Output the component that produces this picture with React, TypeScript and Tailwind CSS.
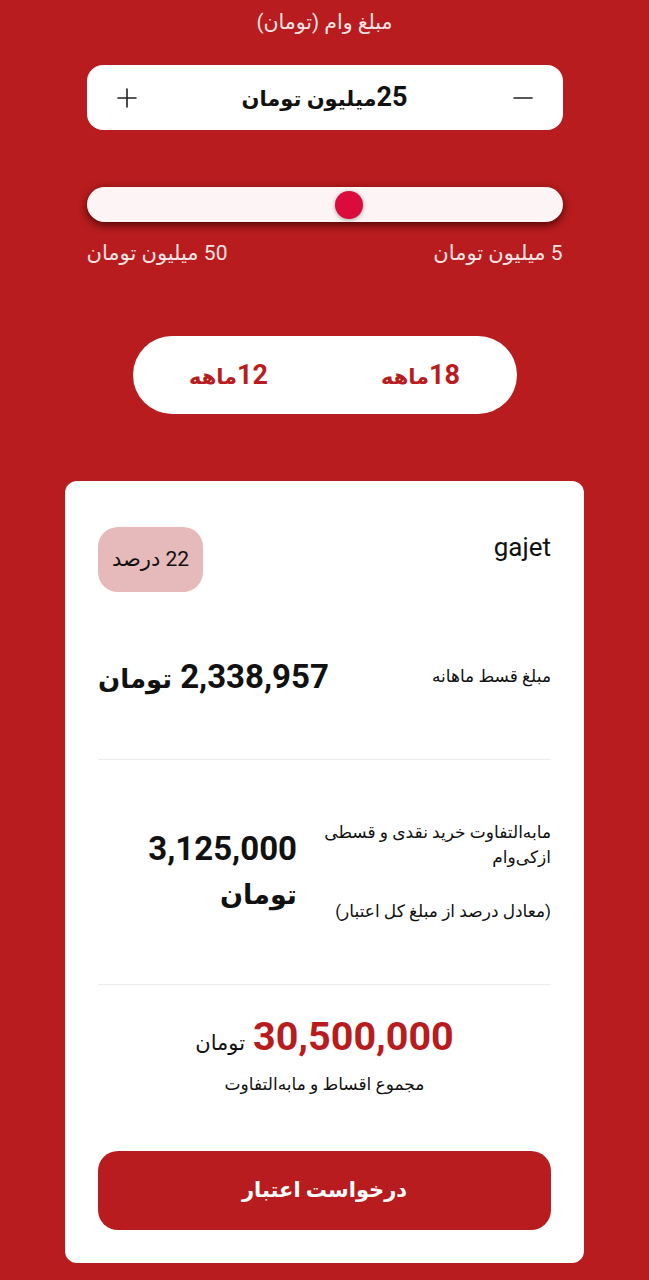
import React, { useState } from "react";

const MIN = 5;
const MAX = 50;

const PlusIcon = () => (
  <svg width="20" height="20" viewBox="0 0 20 20" fill="none" stroke="#222" strokeWidth="1.6" strokeLinecap="round">
    <path d="M10 1v18M1 10h18" />
  </svg>
);

const MinusIcon = () => (
  <svg width="20" height="20" viewBox="0 0 20 20" fill="none" stroke="#222" strokeWidth="1.6" strokeLinecap="round">
    <path d="M1 10h18" />
  </svg>
);

export default function App() {
  const [amount, setAmount] = useState(25);
  const [months, setMonths] = useState(18);

  // thumb position measured from the right edge (rtl slider)
  const ratio = (amount - MIN) / (MAX - MIN);
  const thumbRight = (476 - 28) * ratio;

  return (
    <div
      dir="rtl"
      className="min-h-screen w-full bg-[#b81c1e] pt-[9px] font-['Roboto','DejaVu_Sans',sans-serif] flex flex-col items-center"
    >
      <p className="text-[20.5px] leading-[26px] text-[#f9e3e3]">مبلغ وام (تومان)</p>

      {/* stepper */}
      <div className="mt-[30px] w-[476px] h-[65px] rounded-[16px] bg-white flex items-center justify-between px-[30px]">
        <button onClick={() => setAmount((a) => Math.max(MIN, a - 1))} className="flex">
          <MinusIcon />
        </button>
        <span className="font-bold text-[#111] flex items-baseline">
          <span className="text-[27px]">{amount}</span>
          <span className="text-[21px]">میلیون تومان</span>
        </span>
        <button onClick={() => setAmount((a) => Math.min(MAX, a + 1))} className="flex">
          <PlusIcon />
        </button>
      </div>

      {/* slider */}
      <div className="mt-[57px] relative w-[476px] h-[35px] rounded-full bg-[#fdf5f5] shadow-[0_3px_9px_rgba(50,0,0,0.8)]">
        <div
          className="absolute top-[4px] w-[28px] h-[28px] rounded-full bg-[#dc0b3d] shadow-[0_1px_4px_rgba(0,0,0,0.35)]"
          style={{ right: thumbRight }}
        />
      </div>
      <div className="mt-[19px] w-[476px] flex justify-between text-[21px] leading-[24px] text-[#f9e3e3]">
        <span>{MIN} میلیون تومان</span>
        <span>{MAX} میلیون تومان</span>
      </div>

      {/* months */}
      <div className="mt-[71px] w-[384px] h-[78px] rounded-full bg-white flex items-center">
        {[18, 12].map((m) => (
          <button
            key={m}
            onClick={() => setMonths(m)}
            className="flex-1 flex items-baseline justify-center font-bold text-[#b81c1e]"
          >
            <span className="text-[27px]">{m}</span>
            <span className="text-[21px]">ماهه</span>
          </button>
        ))}
      </div>

      {/* result card */}
      <div className="mt-[67px] w-[519px] rounded-[12px] bg-white px-[33px] pt-[46px] pb-[33px] text-[#111]">
        <div className="h-[65px] flex items-start justify-between">
          <span className="mt-[6px] text-[26px] leading-[28px] font-['Roboto',sans-serif]">gajet</span>
          <span className="w-[105px] h-[65px] rounded-[20px] bg-[#e6b9ba] flex items-center justify-center text-[21px]">
            22 درصد
          </span>
        </div>

        <div className="mt-[65px] h-[40px] flex items-center justify-between">
          <span className="text-[17px]">مبلغ قسط ماهانه</span>
          <span className="font-bold flex items-baseline gap-[8px]">
            <span className="text-[33px]">2,338,957</span>
            <span className="text-[26px]">تومان</span>
          </span>
        </div>

        <div className="mt-[62px] h-px bg-[#ececec]" />

        <div className="py-[60px] flex items-center gap-[25px]">
          <div className="w-[229px] text-[17px] leading-[25px] whitespace-nowrap">
            <p>
              مابه‌التفاوت خرید نقدی و قسطی
              <br />
              ازکی‌وام
            </p>
            <p className="mt-[29px]">(معادل درصد از مبلغ کل اعتبار)</p>
          </div>
          <div className="flex-1 leading-[47px] font-bold">
            <p className="text-[33px]">3,125,000</p>
            <p className="text-[27px]">تومان</p>
          </div>
        </div>

        <div className="h-px bg-[#ececec]" />

        <div className="mt-[27px] flex items-baseline justify-center gap-[8px]">
          <span className="text-[39.5px] leading-[50px] font-bold text-[#b81c1e]">30,500,000</span>
          <span className="text-[21px]">تومان</span>
        </div>
        <p className="mt-[10px] text-center text-[17px] leading-[25px]">مجموع اقساط و مابه‌التفاوت</p>

        <button className="mt-[54px] w-full h-[79px] rounded-[20px] bg-[#b81c1e] text-white text-[21px] font-bold">
          درخواست اعتبار
        </button>
      </div>
      <div className="h-[17px]" />
      <span className="hidden">{months}</span>
    </div>
  );
}
